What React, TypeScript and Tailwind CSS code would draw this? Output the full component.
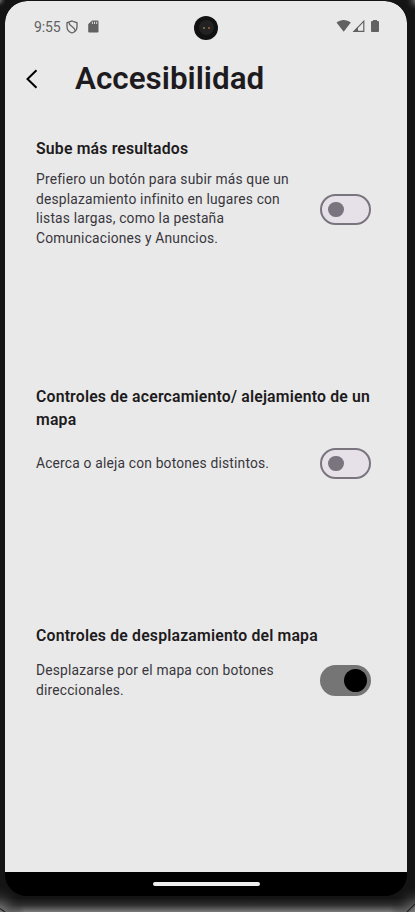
type SettingProps = {
  title: string;
  lines: string[];
  on?: boolean;
  className: string;
  rowClassName: string;
};

function Toggle({ on = false }: { on?: boolean }) {
  return on ? (
    <button role="switch" aria-checked="true" className="flex h-[31px] w-[51px] shrink-0 items-center justify-end rounded-full bg-[#757575] pr-[4px]">
      <span className="size-[23.5px] rounded-full bg-black" />
    </button>
  ) : (
    <button role="switch" aria-checked="false" className="flex h-[31px] w-[51px] shrink-0 items-center rounded-full border-2 border-[#79747e] bg-[#e6e0e9] pl-[6px]">
      <span className="size-[15.5px] rounded-full bg-[#79747e]" />
    </button>
  );
}

function Setting({ title, lines, on, className, rowClassName }: SettingProps) {
  return (
    <section className={className}>
      <h2 className="w-[345px] text-[15.8px] leading-[23px] font-semibold tracking-[0.18px] text-[#1d1b20]">{title}</h2>
      <div className={`flex items-center justify-between ${rowClassName}`}>
        <p className="text-[13.8px] leading-[19.5px] tracking-[0.19px] whitespace-nowrap text-[#38363c]">
          {lines.map((line) => (
            <span key={line} className="block">{line}</span>
          ))}
        </p>
        <Toggle on={on} />
      </div>
    </section>
  );
}

function StatusBar() {
  return (
    <div className="flex h-[52px] shrink-0 items-center pl-[29px] text-[#616161]">
      <span className="w-[32px] text-[14px] leading-none tracking-[-0.1px]">9:55</span>
      <svg className="-mt-px h-[14px] w-[12px]" viewBox="0 0 12 14" fill="none" stroke="currentColor" strokeWidth="1.3">
        <path d="M6 1 11 2.8V6.5C11 9.5 9 12 6 13 3 12 1 9.5 1 6.5V2.8Z" />
        <path d="M3 2.4C3 6.8 8.8 6.2 9.3 10.9" />
      </svg>
      <svg className="-mt-[2px] ml-[10px] h-[13px] w-[11px]" viewBox="0 0 11 13" fill="currentColor">
        <path d="M4 .5H9.5Q10.5.5 10.5 1.5V11.5Q10.5 12.5 9.5 12.5H1.2Q.2 12.5.2 11.5V4.2Z" />
        <path d="M4.4 1.7V4M6.5 1.7V4M8.7 1.7V4" stroke="#e9e9e9" strokeWidth=".9" />
      </svg>
      <span className="mt-px ml-[95px] flex size-[24px] items-center justify-center rounded-full bg-[#111]">
        <span className="flex size-[15px] items-center justify-center gap-[3px] rounded-full bg-[#222]">
          <i className="size-[2px] rounded-full bg-[#8f7a4c]" />
          <i className="size-[2px] rounded-full bg-[#a0603f]" />
        </span>
      </span>
      <svg className="-mt-[2px] ml-[118px] h-[14px] w-[46px]" viewBox="0 0 46 14" fill="currentColor">
        <path d="M.5 3.5C4.8.1 10.6.1 14.8 3.5L7.7 12.7Z" />
        <path d="M18 12.4 27.8 2.2V12.4Z" fill="none" stroke="currentColor" strokeWidth="1.2" />
        <path d="M17 13 22 7.8V13Z" />
        <path d="M37 1H41V2H42Q43 2 43 3V12Q43 13 42 13H36Q35 13 35 12V3Q35 2 36 2H37Z" />
      </svg>
    </div>
  );
}

export default function App() {
  return (
    <div className="relative h-[912px] w-[415px] overflow-hidden bg-[#141414] pt-px pl-[5px] font-['Roboto',sans-serif]">
      <div className="absolute inset-x-0 bottom-0 h-[14px] bg-linear-to-b from-[#141414] via-[#303030] to-[#7c7c7c]" />
      <svg className="absolute inset-0" width="415" height="912" viewBox="0 0 415 912">
        <defs>
          <radialGradient id="edge">
            <stop offset="0" stopColor="#888" />
            <stop offset="1" stopColor="#141414" stopOpacity="0" />
          </radialGradient>
        </defs>
        <circle cx="-3" cy="912" r="28" fill="url(#edge)" />
        <circle cx="418" cy="912" r="28" fill="url(#edge)" />
        <circle cx="417" cy="0" r="12" fill="url(#edge)" />
        <circle cx="-1" cy="0" r="8" fill="url(#edge)" />
        <path d="M0 908.5 5 912M415 904 407 912" stroke="#222" strokeWidth="1.2" />
      </svg>
      <main className="relative flex h-[895px] w-[402px] flex-col overflow-hidden rounded-[22px] bg-black">
        <div className="flex h-[871px] flex-col rounded-t-[22px] bg-[#e9e9e9]">
          <StatusBar />
          <header className="flex h-[51px] items-center pl-[20px]">
            <button aria-label="Atrás" className="w-[50px]">
              <svg width="14" height="20" viewBox="0 0 14 20" fill="none" stroke="#000" strokeWidth="2">
                <path d="M11.5 1.2 2.5 10 11.5 18.8" />
              </svg>
            </button>
            <h1 className="pt-px text-[31.4px] leading-[40px] font-semibold text-[#1d1b20]">Accesibilidad</h1>
          </header>
          <div className="flex-1 pr-[36px] pl-[31px]">
            <Setting
              className="mt-[33px] h-[248px]"
              rowClassName="mt-[10.4px]"
              title="Sube más resultados"
              lines={["Prefiero un botón para subir más que un", "desplazamiento infinito en lugares con", "listas largas, como la pestaña", "Comunicaciones y Anuncios."]}
            />
            <Setting
              className="h-[239px]"
              rowClassName="mt-[17px]"
              title="Controles de acercamiento/ alejamiento de un mapa"
              lines={["Acerca o aleja con botones distintos."]}
            />
            <Setting
              className=""
              rowClassName="mt-[14px]"
              title="Controles de desplazamiento del mapa"
              lines={["Desplazarse por el mapa con botones", "direccionales."]}
              on
            />
          </div>
        </div>
        <nav className="flex h-[24px] items-center justify-center bg-black">
          <span className="h-[4px] w-[107px] rounded-full bg-[#eee]" />
        </nav>
      </main>
    </div>
  );
}
